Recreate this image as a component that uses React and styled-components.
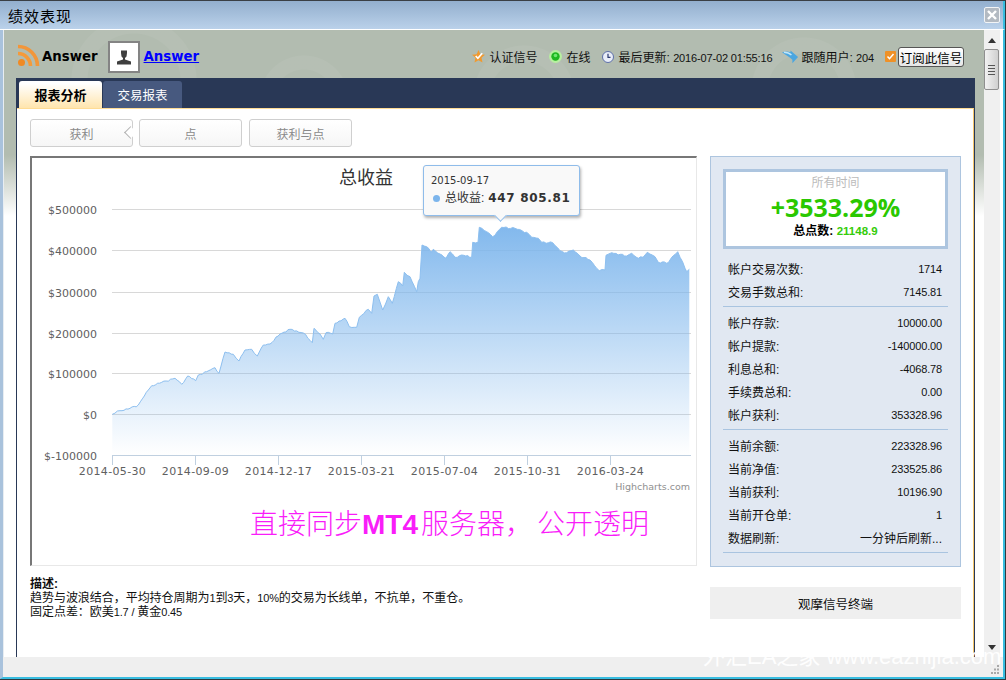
import React from 'react';
import styled, {createGlobalStyle} from 'styled-components';

const CJK = `"Liberation Sans", "Noto Sans CJK SC", sans-serif`;
const WIDE = `"DejaVu Sans", "Noto Sans CJK SC", sans-serif`;

const GlobalStyle = createGlobalStyle`
  html, body {
    margin: 0;
    padding: 0;
    background: #fff;
  }
  * {
    box-sizing: border-box;
  }
`;

const Window = styled.div`
  position: relative;
  width: 1006px;
  height: 680px;
  display: flex;
  flex-direction: column;
  overflow: hidden;
  font-family: ${CJK};
  font-size: 12px;
  color: #000;
  background: #fff;
  border-top: 1px solid #3a3f45;
  border-right: 1px solid #2f3a40;
  border-bottom: 1px solid #2f3a40;
`;

const TitleBar = styled.div`
  height: 29px;
  flex: none;
  display: flex;
  align-items: center;
  justify-content: space-between;
  padding: 0 3px 0 8px;
  background: linear-gradient(#93afce, #bad1ea);
  border-bottom: 1px solid #fff;
  border-right: 2px solid #38bde0;
`;

const TitleText = styled.div`
  font-size: 15px;
  letter-spacing: 1px;
  color: #000;
`;

const CloseButton = styled.button`
  width: 16px;
  height: 16px;
  padding: 0;
  display: flex;
  align-items: center;
  justify-content: center;
  background: #b3bac2;
  border: 1px solid #f2f4f6;
  border-radius: 2px;
`;

const Middle = styled.div`
  flex: 1;
  min-height: 0;
  display: flex;
  border-left: 3px solid #a9c2dc;
  border-right: 2px solid #38bde0;
`;

const Page = styled.div`
  flex: 1;
  min-width: 0;
  display: flex;
  flex-direction: column;
  border-left: 1px solid #e8edf2;
  background:
    radial-gradient(circle at 130px 50px, transparent 46px, rgba(255,255,255,.05) 47px, rgba(255,255,255,.05) 62px, transparent 63px),
    radial-gradient(circle at 520px 66px, transparent 34px, rgba(255,255,255,.05) 35px, rgba(255,255,255,.05) 50px, transparent 51px),
    radial-gradient(circle at 800px 60px, transparent 36px, rgba(255,255,255,.05) 37px, rgba(255,255,255,.05) 52px, transparent 53px),
    radial-gradient(circle at 300px 70px, transparent 30px, rgba(255,255,255,.05) 31px, rgba(255,255,255,.05) 44px, transparent 45px),
    linear-gradient(#b2bcb0 0, #b2bcb0 125px, #fff 186px);
`;

const Header = styled.div`
  height: 48px;
  flex: none;
  display: flex;
  align-items: center;
  padding: 5px 20px 0 13px;
`;

const RssSvg = styled.svg`
  margin-top: -2px;
`;

const OwnerName = styled.span`
  font-family: ${WIDE};
  font-size: 13.3px;
  font-weight: bold;
  margin-left: 2px;
`;

const Avatar = styled.div`
  width: 32px;
  height: 32px;
  margin-left: 10px;
  display: flex;
  align-items: center;
  justify-content: center;
  background: #fff;
  border: 2px solid #848484;
`;

const OwnerLink = styled.a`
  font-family: ${WIDE};
  font-size: 13.3px;
  font-weight: bold;
  color: #00f;
  text-decoration: underline;
  margin-left: 4px;
`;

const Meta = styled.div`
  margin-left: auto;
  display: flex;
  align-items: center;
`;

const MetaItem = styled.span`
  display: flex;
  align-items: center;
  gap: ${props => (props.$tight ? 2 : 4)}px;
  margin-left: ${props => props.$gap}px;
  white-space: pre;
  color: #111;
`;

// latin figures run narrower than the CJK text around them
const Num = styled.span`
  font-size: 11px;
  letter-spacing: -0.15px;
`;

const SubscribeButton = styled.button`
  height: 20px;
  width: 66px;
  margin-left: 2px;
  padding: 0;
  font-family: ${CJK};
  font-size: 12.5px;
  color: #000;
  background: linear-gradient(#fff, #e6e6e6);
  border: 1px solid #555;
  border-radius: 3px;
`;

const Panel = styled.div`
  flex: 1;
  min-height: 0;
  display: flex;
  flex-direction: column;
  margin: 0 9px 0 12px;
  background: #293856;
  border-right: 1px solid #293856;
  border-left: 1px solid #293856;
`;

const Tabs = styled.div`
  height: 30px;
  flex: none;
  display: flex;
  align-items: flex-end;
  gap: 1px;
  padding-left: 2px;
`;

const Tab = styled.div`
  width: ${props => props.$width}px;
  height: 27px;
  display: flex;
  align-items: center;
  justify-content: center;
  border-radius: 3px 3px 0 0;
  font-size: ${props => (props.$active ? '13px' : '12.5px')};
  font-weight: ${props => (props.$active ? 'bold' : 'normal')};
  color: ${props => (props.$active ? '#000' : '#fff')};
  background: ${props => (props.$active ? 'linear-gradient(#fff 10%, #ffe5ae)' : '#47597f')};
`;

const Content = styled.div`
  flex: 1;
  min-height: 0;
  padding: 10px 13px 0 13px;
  background: #fff;
  border-top: 1px solid #ffdc95;
  border-right: 1px solid #f5c66a;
`;

const ModeRow = styled.div`
  display: flex;
  gap: 6px;
  height: 28px;
  margin-bottom: 9px;
`;

const ModeButton = styled.div`
  position: relative;
  width: 103px;
  height: 28px;
  margin-right: ${props => props.$extra || 0}px;
  display: flex;
  align-items: center;
  justify-content: center;
  color: #8a8a8a;
  background: linear-gradient(#fff, #f6f6f6);
  border: 1px solid #cfcfcf;
  border-radius: 3px;
`;

const ModeNotch = styled.span`
  position: absolute;
  right: -1px;
  top: 8px;
  width: 9px;
  height: 9px;
  margin-right: -1px;
  background: #fff;
  border-left: 1px solid #b0b0b0;
  border-bottom: 1px solid #b0b0b0;
  transform: translateX(1px) rotate(45deg);
`;

const Columns = styled.div`
  display: flex;
  gap: 13px;
`;

const LeftColumn = styled.div`
  width: 667px;
  flex: none;
`;

const ChartBox = styled.div`
  position: relative;
  height: 410px;
  background: #fff;
  border-top: 2px solid #777;
  border-left: 2px solid #777;
  border-right: 1px solid #e8e8e8;
  border-bottom: 1px solid #e8e8e8;
`;

const ChartSvg = styled.svg`
  display: block;
  width: 664px;
  height: 340px;
`;

const Caption = styled.div`
  padding-left: 218px;
  margin-top: 9px;
  font-size: 28px;
  font-weight: 300;
  line-height: 36px;
  white-space: nowrap;
  color: #f91df9;
`;

const CaptionLatin = styled.span`
  font-weight: bold;
  margin-right: 3px;
`;

const CaptionComma = styled.span`
  margin-right: 4px;
`;

const Tooltip = styled.div`
  position: absolute;
  left: 391px;
  top: 7px;
  width: 157px;
  height: 51px;
  padding: 8px 7px;
  background: #f9f9f9;
  border: 1px solid #8fbcea;
  border-radius: 3px;
  box-shadow: 1px 2px 3px rgba(0, 0, 0, 0.3);
  color: #333;
  &::after {
    content: '';
    position: absolute;
    left: 72px;
    bottom: -5px;
    width: 8px;
    height: 8px;
    background: #f9f9f9;
    border-right: 1px solid #8fbcea;
    border-bottom: 1px solid #8fbcea;
    transform: rotate(45deg);
  }
`;

const TooltipDate = styled.div`
  font-family: ${WIDE};
  font-size: 10px;
  line-height: 14px;
`;

const TooltipRow = styled.div`
  display: flex;
  align-items: center;
  margin-top: 2px;
  line-height: 16px;
  white-space: nowrap;
`;

const TooltipDot = styled.span`
  width: 7px;
  height: 7px;
  flex: none;
  margin: 1px 5px 0 2px;
  border-radius: 50%;
  background: #7cb5ec;
`;

const TooltipValue = styled.b`
  font-family: ${WIDE};
  font-size: 12px;
  letter-spacing: 0.65px;
  margin-left: 4px;
`;

const Description = styled.div`
  margin-top: 11px;
  line-height: 14px;
  letter-spacing: -0.04px;
  color: #111;
`;

const RightColumn = styled.div`
  width: 251px;
  flex: none;
`;

const StatsPanel = styled.div`
  height: 411px;
  padding: 12px 12px 0;
  background: #e1e8f2;
  border: 1px solid #adc5df;
`;

const ReturnCard = styled.div`
  height: 80px;
  display: flex;
  flex-direction: column;
  align-items: center;
  background: #fff;
  border: 3px solid #adc5df;
  margin-bottom: 4px;
`;

const CardLabel = styled.div`
  margin-top: 3px;
  line-height: 16px;
  color: #bbb;
`;

const CardValue = styled.div`
  font-family: "Open Sans", sans-serif;
  font-size: 25px;
  font-weight: bold;
  line-height: 32px;
  color: #2ac800;
`;

const CardPoints = styled.div`
  font-weight: bold;
  line-height: 14px;
  margin-top: 1px;
`;

const CardPointsValue = styled.span`
  font-size: 11.5px;
  color: #35cc0a;
`;

const StatGroup = styled.div`
  padding: 5px 6px 2px 5px;
  border-bottom: 1px solid #a9c4e0;
`;

const StatRow = styled.div`
  height: 23px;
  padding-bottom: 2px;
  display: flex;
  align-items: center;
  justify-content: space-between;
  color: #111;
`;

const WatchButton = styled.button`
  display: block;
  width: 100%;
  height: 32px;
  margin-top: 20px;
  padding: 0;
  font-family: ${CJK};
  font-size: 12.5px;
  color: #111;
  background: #efefef;
  border: none;
`;

const ScrollBar = styled.div`
  width: 19px;
  flex: none;
  display: flex;
  flex-direction: column;
  align-items: flex-start;
  background: linear-gradient(90deg, #f0f0f0 16px, #fff 16px);
`;

const ScrollArrow = styled.span`
  width: 0;
  height: 0;
  margin: ${props => props.$margin};
  border-left: 4px solid transparent;
  border-right: 4px solid transparent;
  ${props => (props.$down ? 'border-top: 5px solid #333;' : 'border-bottom: 5px solid #333;')}
`;

const ScrollThumb = styled.div`
  width: 15px;
  height: 41px;
  margin-top: 6px;
  display: flex;
  flex-direction: column;
  align-items: center;
  justify-content: center;
  gap: 2px;
  background: linear-gradient(90deg, #f2f2f2, #cfcfcf);
  border: 1px solid #8f8f8f;
  border-radius: 2px;
`;

const ThumbLine = styled.span`
  width: 7px;
  height: 1px;
  background: #555;
`;

const StatusBar = styled.div`
  height: 22px;
  flex: none;
  display: flex;
  justify-content: flex-end;
  align-items: flex-end;
  padding: 0 3px 2px 0;
  background: #efefef;
  border-left: 3px solid #a9c2dc;
  border-right: 2px solid #38bde0;
  border-bottom: 2px solid #38bde0;
`;

const Watermark = styled.div`
  position: absolute;
  left: 703px;
  top: 641px;
  font-size: 22px;
  line-height: 30px;
  white-space: nowrap;
  color: rgba(255, 255, 255, 0.95);
  pointer-events: none;
`;

const RssIcon = () => (
  <RssSvg width="23" height="23" viewBox="0 0 23 23">
    <circle cx="4.5" cy="18.5" r="3.5" fill="#f08a24" />
    <path d="M1 9.5a12.5 12.5 0 0 1 12.5 12.5" fill="none" stroke="#f59a3a" strokeWidth="3.6" />
    <path d="M1 2.5a19.5 19.5 0 0 1 19.5 19.5" fill="none" stroke="#f2963a" strokeWidth="3.6" />
  </RssSvg>
);

const UserIcon = () => (
  <svg width="16" height="16" viewBox="0 0 16 16">
    <path d="M5 1.500h6v2.500l-.5 3.500-1.500 1.500v1.500l6 2v3H1v-3l6-2V9L5.500 7.500 5 4z" fill="#3f3f3f" />
  </svg>
);

const StarIcon = () => (
  <svg width="13" height="13" viewBox="0 0 14 14">
    <path d="M7 0l2 4.500 5 .5-3.700 3.300L11.300 13.500 7 11l-4.300 2.500 1-5.200L0 5l5-.5z" fill="#f09a30" />
    <path d="M4 6.500l2.300 2.500L11 3.500" fill="none" stroke="#fff" strokeWidth="1.800" />
  </svg>
);

const OnlineIcon = () => (
  <svg width="13" height="13" viewBox="0 0 13 13">
    <circle cx="6.500" cy="6.500" r="6.500" fill="#b7efa0" />
    <circle cx="6.500" cy="6.500" r="4.200" fill="#1fb81f" />
    <circle cx="6.500" cy="5.500" r="1.800" fill="#6fe86f" />
  </svg>
);

const ClockIcon = () => (
  <svg width="12" height="12" viewBox="0 0 12 12">
    <circle cx="6" cy="6" r="5.500" fill="#e8edf8" stroke="#5d6fa8" />
    <path d="M6 2.800V6.300H8.500" fill="none" stroke="#2c3a70" strokeWidth="1.200" />
  </svg>
);

const ArrowIcon = () => (
  <svg width="17" height="14" viewBox="0 0 18 14">
    <path d="M0 2c4-1.500 7-1 9 0V0l8 7-6 6.500V10C8 7 4 5 0 2z" fill="#4ba6e0" />
    <path d="M2 2c3 0 6 1 8 3" fill="none" stroke="#bfe6fb" strokeWidth="1.500" />
  </svg>
);

const CheckBoxIcon = () => (
  <svg width="11" height="11" viewBox="0 0 11 11">
    <rect width="11" height="11" rx="1" fill="#ef9127" />
    <path d="M2.500 5.500l2 2.200L8.500 3" fill="none" stroke="#fff" strokeWidth="1.500" />
  </svg>
);

const CloseIcon = () => (
  <svg width="10" height="10" viewBox="0 0 10 10">
    <path d="M1 1l8 8M9 1l-8 8" stroke="#fff" strokeWidth="2.400" />
  </svg>
);

const GripIcon = () => (
  <svg width="10" height="10" viewBox="0 0 10 10" fill="#a8a8a8">
    <rect x="7" y="0" width="2" height="2" />
    <rect x="4" y="3.500" width="2" height="2" />
    <rect x="7" y="3.500" width="2" height="2" />
    <rect x="1" y="7" width="2" height="2" />
    <rect x="4" y="7" width="2" height="2" />
    <rect x="7" y="7" width="2" height="2" />
  </svg>
);

// traced from the chart, page coordinates
const CURVE = [
  [112.3, 414.3], [120, 410.7], [130, 408.3], [138.3, 405], [148.3, 390], [151.7, 385.7],
  [161.7, 382.3], [175, 378.3], [181.7, 384.3], [187.7, 376], [195.7, 380.7], [198.3, 375],
  [206.7, 371.7], [215, 367.7], [219, 373.3], [225, 352], [233.3, 354.3], [239, 361],
  [245, 350], [251.7, 349.3], [257.3, 356], [263.3, 345], [270, 344], [280, 334],
  [290, 329.3], [303.3, 333], [312.3, 342.7], [314, 328.3], [320, 334], [323.3, 339.3],
  [326, 332.7], [332.7, 334], [335, 323.3], [345, 318.3], [349.3, 326.7], [356.7, 327.3],
  [359.3, 317.3], [368.3, 309.3], [371.7, 313.3], [374, 296], [377.3, 294.3], [382.7, 310],
  [388.3, 296.7], [392.3, 303.3], [398.3, 281.7], [402.7, 286], [404.3, 272.3], [410, 276.7],
  [416.7, 291.7], [418.3, 281.7], [420, 278.3], [422, 245], [426.7, 246.7], [431, 252.3],
  [433.3, 249.3], [440, 254], [446, 258.3], [450, 251.7], [455, 257.3], [461.7, 255],
  [471.7, 257.3], [472.7, 242.3], [478, 242.3], [479.3, 227.3], [486.7, 231.7], [492.7, 236.7],
  [501.7, 227.3], [515, 228.3], [526.7, 232.3], [531.7, 237.3], [538.3, 238.3], [541.7, 242.3],
  [552.7, 242.7], [560, 250.7], [566.7, 252.7], [573.3, 250], [580, 256], [590, 260],
  [599.3, 270.7], [605, 270], [606, 255.3], [611.7, 252.7], [626.7, 256], [631.7, 253.3],
  [638.3, 258.3], [643, 257.3], [647.3, 252.3], [655, 256.7], [658.3, 262.3], [668.3, 262.7],
  [671.7, 257.3], [677.7, 251.7], [685, 268.3], [686.7, 271.7], [689.3, 269.3],
];

// the traced points are coarse, so break long segments up with a small daily wobble
const roughen = points => {
  const out = [];
  let step = 0;
  points.forEach(([x, y], index) => {
    out.push([x, y]);
    const next = points[index + 1];
    if (!next) return;
    const parts = Math.floor((next[0] - x) / 2);
    for (let i = 1; i < parts; i++) {
      step += 1;
      const wobble = 0.6 * Math.sin(step * 2.3) + 0.4 * Math.sin(step * 5.1);
      out.push([x + ((next[0] - x) * i) / parts, y + ((next[1] - y) * i) / parts + wobble]);
    }
  });
  return out;
};

const curvePath = roughen(CURVE)
  .map(([x, y]) => `${x.toFixed(1)},${y.toFixed(1)}`)
  .join(' L');

const Y_LABELS = [
  ['$500000', 209.5], ['$400000', 250.5], ['$300000', 292.5], ['$200000', 333.5],
  ['$100000', 373.5], ['$0', 414.5], ['$-100000', 455.5],
];

const X_LABELS = [
  ['2014-05-30', 112.5], ['2014-09-09', 195.5], ['2014-12-17', 278.5], ['2015-03-21', 361.5],
  ['2015-07-04', 444.5], ['2015-10-31', 527.5], ['2016-03-24', 610.5],
];

const Chart = () => (
  <ChartSvg viewBox="32 158 664 340">
    <defs>
      <linearGradient id="areaFill" gradientUnits="userSpaceOnUse" x1="0" y1="227" x2="0" y2="455">
        <stop offset="0" stopColor="#7cb5ec" stopOpacity="0.95" />
        <stop offset="1" stopColor="#7cb5ec" stopOpacity="0" />
      </linearGradient>
    </defs>
    <text x="366" y="184" textAnchor="middle" fontFamily={CJK} fontSize="18" fill="#333">
      总收益
    </text>
    {Y_LABELS.slice(0, -1).map(([label, y]) => (
      <line key={label} x1="112" x2="691" y1={y} y2={y} stroke="#d8d8d8" />
    ))}
    <path d={`M${curvePath} L689.3,455 L112.3,455 Z`} fill="url(#areaFill)" />
    <path d={`M${curvePath}`} fill="none" stroke="#8dbfef" />
    <line x1="112" x2="691" y1="455.5" y2="455.5" stroke="#c0d0e0" />
    {X_LABELS.map(([label, x]) => (
      <g key={label}>
        <line x1={x} x2={x} y1="455" y2="465" stroke="#c0d0e0" />
        <text x={x} y="475" textAnchor="middle" fontFamily={WIDE} fontSize="11" letterSpacing="0.35" fill="#606060">
          {label}
        </text>
      </g>
    ))}
    {Y_LABELS.map(([label, y]) => (
      <text key={label} x="97" y={y + 4} textAnchor="end" fontFamily={WIDE} fontSize="11" fill="#606060">
        {label}
      </text>
    ))}
    <text x="690" y="490" textAnchor="end" fontFamily={WIDE} fontSize="9.5" fill="#909090">
      Highcharts.com
    </text>
  </ChartSvg>
);

const STAT_GROUPS = [
  [
    ['帐户交易次数:', '1714'],
    ['交易手数总和:', '7145.81'],
  ],
  [
    ['帐户存款:', '10000.00'],
    ['帐户提款:', '-140000.00'],
    ['利息总和:', '-4068.78'],
    ['手续费总和:', '0.00'],
    ['帐户获利:', '353328.96'],
  ],
  [
    ['当前余额:', '223328.96'],
    ['当前净值:', '233525.86'],
    ['当前获利:', '10196.90'],
    ['当前开仓单:', '1'],
    ['数据刷新:', '一分钟后刷新...'],
  ],
];

const App = () => {
  return (
    <>
      <GlobalStyle />
      <Window>
        <TitleBar>
          <TitleText>绩效表现</TitleText>
          <CloseButton aria-label="关闭">
            <CloseIcon />
          </CloseButton>
        </TitleBar>
        <Middle>
          <Page>
            <Header>
              <RssIcon />
              <OwnerName>Answer</OwnerName>
              <Avatar>
                <UserIcon />
              </Avatar>
              <OwnerLink href="#">Answer</OwnerLink>
              <Meta>
                <MetaItem $gap={0}>
                  <StarIcon />
                  认证信号
                </MetaItem>
                <MetaItem $gap={12}>
                  <OnlineIcon />
                  在线
                </MetaItem>
                <MetaItem $gap={12}>
                  <ClockIcon />
                  <span>
                    最后更新: <Num>2016-07-02 01:55:16</Num>
                  </span>
                </MetaItem>
                <MetaItem $gap={10} $tight>
                  <ArrowIcon />
                  <span>
                    跟随用户: <Num>204</Num>
                  </span>
                </MetaItem>
                <MetaItem $gap={11}>
                  <CheckBoxIcon />
                </MetaItem>
                <SubscribeButton>订阅此信号</SubscribeButton>
              </Meta>
            </Header>
            <Panel>
              <Tabs>
                <Tab $active $width={83}>
                  报表分析
                </Tab>
                <Tab $width={79}>交易报表</Tab>
              </Tabs>
              <Content>
                <ModeRow>
                  <ModeButton>
                    获利
                    <ModeNotch />
                  </ModeButton>
                  <ModeButton $extra={1}>点</ModeButton>
                  <ModeButton>获利与点</ModeButton>
                </ModeRow>
                <Columns>
                  <LeftColumn>
                    <ChartBox>
                      <Chart />
                      <Caption>
                        直接同步<CaptionLatin>MT4</CaptionLatin>服务器<CaptionComma>，</CaptionComma>公开透明
                      </Caption>
                      <Tooltip>
                        <TooltipDate>2015-09-17</TooltipDate>
                        <TooltipRow>
                          <TooltipDot />
                          总收益:
                          <TooltipValue>447 805.81</TooltipValue>
                        </TooltipRow>
                      </Tooltip>
                    </ChartBox>
                    <Description>
                      <b>描述:</b>
                      <br />
                      趋势与波浪结合，平均持仓周期为<Num>1</Num>到<Num>3</Num>天，<Num>10%</Num>的交易为长线单，不抗单，不重仓。
                      <br />
                      固定点差：欧美<Num>1.7 / </Num>黄金<Num>0.45</Num>
                    </Description>
                  </LeftColumn>
                  <RightColumn>
                    <StatsPanel>
                      <ReturnCard>
                        <CardLabel>所有时间</CardLabel>
                        <CardValue>+3533.29%</CardValue>
                        <CardPoints>
                          总点数: <CardPointsValue>21148.9</CardPointsValue>
                        </CardPoints>
                      </ReturnCard>
                      {STAT_GROUPS.map((group, index) => (
                        <StatGroup key={index}>
                          {group.map(([label, value]) => (
                            <StatRow key={label}>
                              <span>{label}</span>
                              {/^[\d.-]+$/.test(value) ? <Num>{value}</Num> : <span>{value}</span>}
                            </StatRow>
                          ))}
                        </StatGroup>
                      ))}
                    </StatsPanel>
                    <WatchButton>观摩信号终端</WatchButton>
                  </RightColumn>
                </Columns>
              </Content>
            </Panel>
          </Page>
          <ScrollBar>
            <ScrollArrow $margin="8px 0 0 4px" />
            <ScrollThumb>
              <ThumbLine />
              <ThumbLine />
              <ThumbLine />
              <ThumbLine />
            </ScrollThumb>
            <ScrollArrow $down $margin="auto 0 7px 4px" />
          </ScrollBar>
        </Middle>
        <StatusBar>
          <GripIcon />
        </StatusBar>
        <Watermark>外汇EA之家 www.eazhijia.com</Watermark>
      </Window>
    </>
  );
};

export default App;
